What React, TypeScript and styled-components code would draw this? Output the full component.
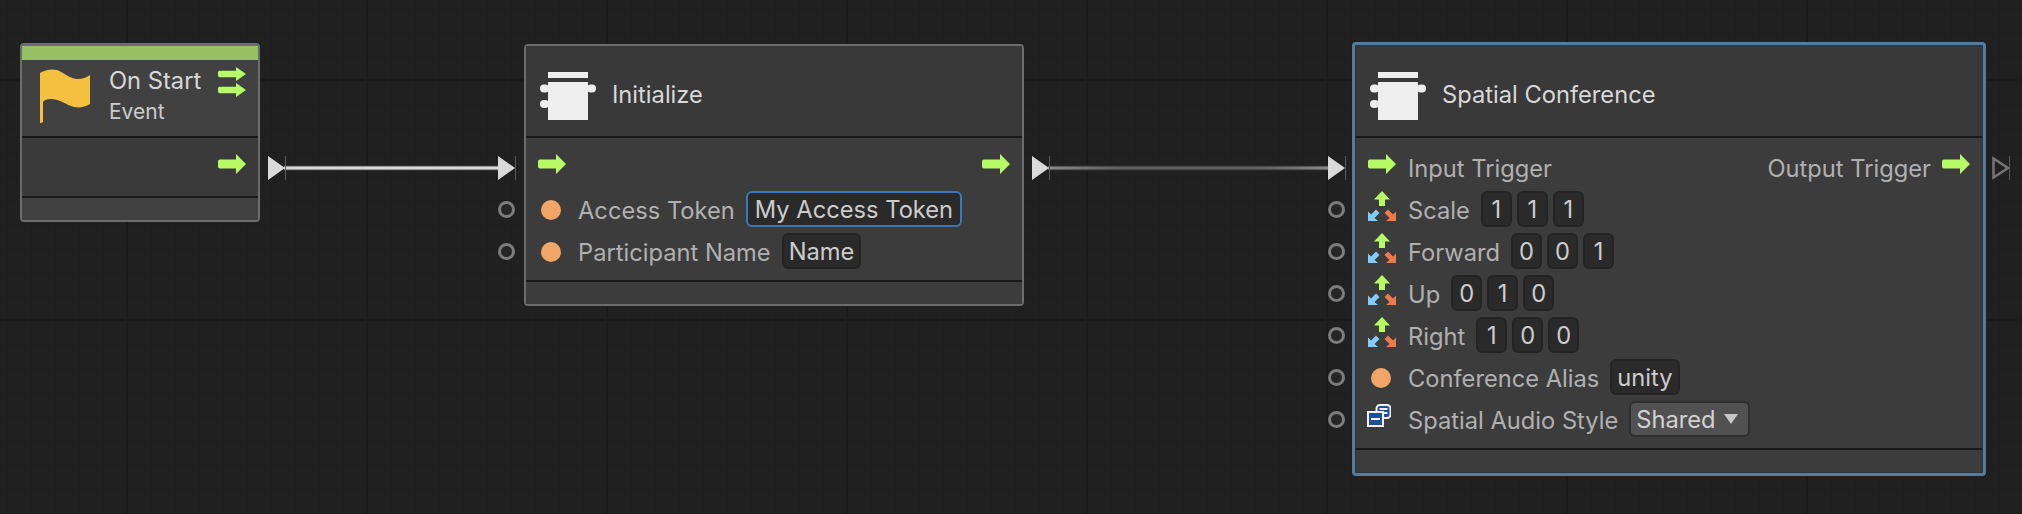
import React from 'react';
import styled, { createGlobalStyle } from 'styled-components';

const GlobalStyle = createGlobalStyle`
  html, body {
    margin: 0;
    padding: 0;
    background: #202020;
  }
  * {
    box-sizing: border-box;
  }
`;

const Canvas = styled.div`
  position: relative;
  width: 2022px;
  height: 514px;
  overflow: hidden;
  font-family: Inter, "Liberation Sans", sans-serif;
  background-color: #202020;
  background-image:
    linear-gradient(to right, #1a1a1a 2px, transparent 2px),
    linear-gradient(to bottom, #1a1a1a 2px, transparent 2px),
    linear-gradient(to right, #1e1e1e 1px, transparent 1px),
    linear-gradient(to bottom, #1e1e1e 1px, transparent 1px);
  background-size: 240px 240px, 240px 240px, 24px 24px, 24px 24px;
  background-position: 126px 0, 0 79px, 7px 0, 0 8px;
`;

const Wire = styled.svg<{ $left: number; $width: number }>`
  position: absolute;
  left: ${p => p.$left}px;
  top: 162px;
  width: ${p => p.$width}px;
  height: 12px;
`;

const Node = styled.div<{ $left: number; $top: number; $width: number; $selected?: boolean; $thick?: boolean }>`
  position: absolute;
  left: ${p => p.$left}px;
  top: ${p => p.$top}px;
  width: ${p => p.$width}px;
  display: flex;
  flex-direction: column;
  border-radius: 4px;
  border-style: solid;
  border-width: ${p => (p.$selected ? '3px' : p.$thick ? '3px 2px 2px' : '2px')};
  border-color: ${p => (p.$selected ? '#557d9b' : '#6c6c6c')};
  padding: ${p => (p.$selected ? '1px' : '0')};
  background: ${p => (p.$selected ? '#2f3438' : '#3c3c3c')};
`;

const AccentBar = styled.div`
  height: 14px;
  background: #96c163;
`;

const Header = styled.div<{ $height: number; $shade: string }>`
  display: flex;
  align-items: center;
  height: ${p => p.$height}px;
  padding-left: 14px;
  border-bottom: 2px solid #191919;
  background: ${p => p.$shade};
`;

const ScriptHeader = styled(Header)`
  padding-top: 10px;
`;

const Title = styled.div`
  margin-left: 16px;
  margin-bottom: 4px;
  font-size: 23.7px;
  color: #d8d8d8;
`;

const EventText = styled.div`
  display: flex;
  flex-direction: column;
  gap: 5px;
  margin-left: 19px;
  margin-bottom: 5px;
`;

const EventTitle = styled.div`
  font-size: 23.7px;
  line-height: 28px;
  color: #d8d8d8;
`;

const EventKind = styled.div`
  font-size: 21px;
  line-height: 24px;
  color: #cccccc;
`;

const FlagSlot = styled.div`
  display: flex;
  margin-left: 4px;
  margin-bottom: 4px;
`;

const TriggerStack = styled.div`
  display: flex;
  flex-direction: column;
  gap: 2px;
  margin-left: auto;
  margin-right: 12px;
  margin-bottom: 32px;
`;

const Body = styled.div<{ $shade?: string }>`
  padding: 9px 0 7px;
  background: ${p => p.$shade || '#3c3c3c'};
`;

const Row = styled.div`
  position: relative;
  display: flex;
  align-items: center;
  height: 42px;
  padding: 0 12px;
`;

const Spacer = styled.span`
  margin-left: auto;
`;

const IconSlot = styled.div`
  display: flex;
  align-items: center;
  justify-content: center;
  flex: none;
  width: 28px;
  margin-right: 12px;
`;

const Dot = styled.span`
  display: block;
  width: 20px;
  height: 20px;
  margin: 0 3px 1px 0;
  border-radius: 50%;
  background: #f1a567;
`;

const Label = styled.span`
  margin-right: 11px;
  font-size: 23.7px;
  white-space: nowrap;
  color: #b0b0b0;
`;

const OutLabel = styled(Label)`
  margin-left: auto;
`;

const Field = styled.span<{ $focused?: boolean }>`
  display: flex;
  align-items: center;
  justify-content: center;
  height: 36px;
  margin-bottom: 2px;
  padding: 0 ${p => (p.$focused ? '7px' : '5px')};
  border: 2px solid ${p => (p.$focused ? '#3b78ba' : '#242424')};
  border-radius: 6px;
  background: #2a2a2a;
  font-size: 23.7px;
  white-space: nowrap;
  color: #cccccc;
`;

const VectorGroup = styled.div`
  display: flex;
  gap: 5px;
`;

const Cell = styled(Field)`
  width: 31px;
  padding: 0;
`;

const Dropdown = styled.span`
  display: flex;
  align-items: center;
  gap: 8px;
  height: 36px;
  margin-bottom: 2px;
  padding: 0 10px 0 5px;
  border: 2px solid #2e2e2e;
  border-radius: 6px;
  background: #515151;
  font-size: 23.7px;
  color: #d2d2d2;
`;

const Caret = styled.span`
  width: 0;
  height: 0;
  border-left: 7px solid transparent;
  border-right: 7px solid transparent;
  border-top: 10px solid #c6c6c6;
`;

const Footer = styled.div<{ $shade?: string }>`
  height: 24px;
  border-top: 2px solid #191919;
  background: ${p => p.$shade || '#3c3c3c'};
`;

const RingPort = styled.span`
  position: absolute;
  left: -28px;
  top: 12px;
  width: 17px;
  height: 17px;
  border: 3px solid #7c7c7c;
  border-radius: 50%;
  background: #262626;
`;

const FlowSvg = styled.svg<{ $side: 'left' | 'right' }>`
  position: absolute;
  ${p => p.$side}: -28px;
  top: 9px;
`;

const TriggerArrow: React.FC<{ small?: boolean }> = ({ small }) => (
  <svg width="28" height={small ? 14 : 20} viewBox="0 0 28 20" preserveAspectRatio="none" style={{ display: 'block', marginBottom: small ? 0 : 8 }}>
    <path d="M2 5.5H18V0L28 10L18 20V14.5H2Q0 14.5 0 12.5V7.5Q0 5.5 2 5.5Z" fill="#b6fb66" />
  </svg>
);

const FlowPort: React.FC<{ side: 'left' | 'right'; hollow?: boolean }> = ({ side, hollow }) => (
  <FlowSvg $side={side} width="18" height="24" viewBox="0 0 18 24">
    {hollow ? (
      <path d="M1.5 2.5L16 12L1.5 21.5Z" fill="none" stroke="#757575" strokeWidth="2.5" />
    ) : (
      <path d="M0 0L17 12L0 24Z" fill="#dadada" />
    )}
    <path d="M17.5 0V24" stroke="#5a5a5a" strokeWidth="1" />
  </FlowSvg>
);

const FlagIcon = () => (
  <svg width="50" height="54" viewBox="0 0 50 54" style={{ display: 'block' }}>
    <path
      d="M0 4Q8 -1 17 1C25 4 30 10 38 10C43 10 47 8 50 6V35C45 38 40 39 34 38C26 36 20 30 11 30C7 30 4 31 3 33V53L1 54L0 54Z"
      fill="#f3c13f"
    />
  </svg>
);

const ScriptIcon = () => (
  <svg width="56" height="48" viewBox="0 0 56 48" style={{ display: 'block' }} fill="#eeeeee">
    <rect x="8" y="0" width="40" height="6" />
    <rect x="8" y="10" width="40" height="38" />
    <rect x="47" y="12.5" width="9" height="8" rx="4" />
    <rect x="0" y="12.5" width="9" height="8" rx="4" />
    <rect x="0" y="28" width="9" height="8" rx="4" />
  </svg>
);

const AxesIcon = () => (
  <svg width="28" height="30" viewBox="0 0 28 30" style={{ display: 'block', marginBottom: 9 }}>
    <path d="M14 0L22 8.5H17V15H11V8.5H6Z" fill="#b6fb66" />
    <path d="M0 30V20.5L3 23.5L8 18.5L11.5 22L6.5 27L10 30Z" fill="#82cdfb" />
    <path d="M28 30V20.5L25 23.5L20 18.5L16.5 22L21.5 27L18 30Z" fill="#ec7a4b" />
  </svg>
);

const EnumIcon = () => (
  <svg width="24" height="23" viewBox="0 0 24 23" style={{ display: 'block', marginBottom: 9, marginLeft: -6 }}>
    <rect x="9.5" y="1" width="14" height="13" rx="3.5" fill="#1f4e9f" stroke="#f2f2f2" strokeWidth="2" />
    <rect x="12.5" y="4" width="8" height="2" fill="#f2f2f2" />
    <rect x="12.5" y="8" width="8" height="2" fill="#f2f2f2" />
    <rect x="1" y="8" width="15" height="14" fill="#1f4e9f" stroke="#f2f2f2" strokeWidth="2" />
    <rect x="4" y="14" width="9" height="2" fill="#f2f2f2" />
  </svg>
);

const Vector: React.FC<{ values: number[] }> = ({ values }) => (
  <VectorGroup>
    {values.map((v, i) => (
      <Cell key={i}>{v}</Cell>
    ))}
  </VectorGroup>
);

const vectorRows = [
  { name: 'Scale', values: [1, 1, 1] },
  { name: 'Forward', values: [0, 0, 1] },
  { name: 'Up', values: [0, 1, 0] },
  { name: 'Right', values: [1, 0, 0] },
];

export default function App() {
  return (
    <>
      <GlobalStyle />
      <Canvas>
        <Wire $left={284} $width={215} viewBox="0 0 215 12">
          <path d="M0 6H215" stroke="#4a4a4a" strokeWidth="5" />
          <path d="M0 6H215" stroke="#dcdcdc" strokeWidth="3" />
        </Wire>
        <Wire $left={1048} $width={281} viewBox="0 0 281 12">
          <defs>
            <linearGradient id="dimWire" x1="0" y1="0" x2="281" y2="0" gradientUnits="userSpaceOnUse">
              <stop offset="0" stopColor="#8a8a8a" />
              <stop offset="0.25" stopColor="#5e5e5e" />
              <stop offset="0.75" stopColor="#5e5e5e" />
              <stop offset="1" stopColor="#8a8a8a" />
            </linearGradient>
          </defs>
          <path d="M0 6H281" stroke="#303030" strokeWidth="5" />
          <path d="M0 6H281" stroke="url(#dimWire)" strokeWidth="3" />
        </Wire>

        <Node $left={20} $top={43} $width={240} $thick>
          <AccentBar />
          <Header $height={78} $shade="#414141">
            <FlagSlot>
              <FlagIcon />
            </FlagSlot>
            <EventText>
              <EventTitle>On Start</EventTitle>
              <EventKind>Event</EventKind>
            </EventText>
            <TriggerStack>
              <TriggerArrow small />
              <TriggerArrow small />
            </TriggerStack>
          </Header>
          <Body $shade="#3a3a3a">
            <Row>
              <Spacer />
              <TriggerArrow />
              <FlowPort side="right" />
            </Row>
          </Body>
          <Footer $shade="#414141" />
        </Node>

        <Node $left={524} $top={44} $width={500}>
          <ScriptHeader $height={92} $shade="#393939">
            <ScriptIcon />
            <Title>Initialize</Title>
          </ScriptHeader>
          <Body>
            <Row>
              <FlowPort side="left" />
              <TriggerArrow />
              <Spacer />
              <TriggerArrow />
              <FlowPort side="right" />
            </Row>
            <Row>
              <RingPort />
              <IconSlot><Dot /></IconSlot>
              <Label>Access Token</Label>
              <Field $focused>My Access Token</Field>
            </Row>
            <Row>
              <RingPort />
              <IconSlot><Dot /></IconSlot>
              <Label>Participant Name</Label>
              <Field>Name</Field>
            </Row>
          </Body>
          <Footer />
        </Node>

        <Node $left={1352} $top={42} $width={634} $selected>
          <ScriptHeader $height={92} $shade="#393939">
            <ScriptIcon />
            <Title>Spatial Conference</Title>
          </ScriptHeader>
          <Body>
            <Row>
              <FlowPort side="left" />
              <IconSlot><TriggerArrow /></IconSlot>
              <Label>Input Trigger</Label>
              <OutLabel>Output Trigger</OutLabel>
              <TriggerArrow />
              <FlowPort side="right" hollow />
            </Row>
            {vectorRows.map(row => (
              <Row key={row.name}>
                <RingPort />
                <IconSlot><AxesIcon /></IconSlot>
                <Label>{row.name}</Label>
                <Vector values={row.values} />
              </Row>
            ))}
            <Row>
              <RingPort />
              <IconSlot><Dot /></IconSlot>
              <Label>Conference Alias</Label>
              <Field>unity</Field>
            </Row>
            <Row>
              <RingPort />
              <IconSlot><EnumIcon /></IconSlot>
              <Label>Spatial Audio Style</Label>
              <Dropdown>
                Shared
                <Caret />
              </Dropdown>
            </Row>
          </Body>
          <Footer />
        </Node>
      </Canvas>
    </>
  );
}
